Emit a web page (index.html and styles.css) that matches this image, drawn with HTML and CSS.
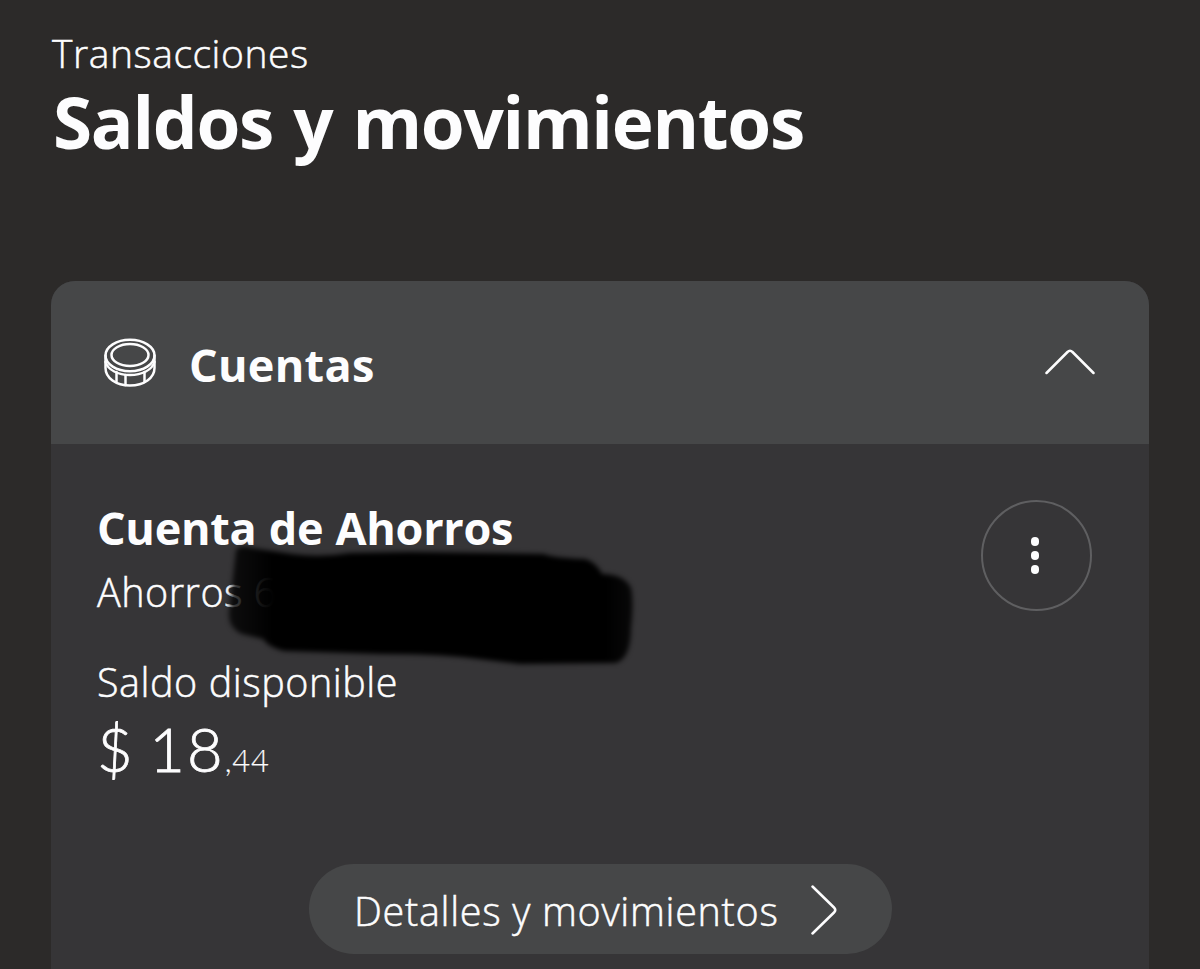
FILE: index.html
```html
<!DOCTYPE html>
<html lang="es">
<head>
    <meta charset="UTF-8">
    <meta name="viewport" content="width=device-width, initial-scale=1.0">
    <title>Saldos y movimientos</title>
    <link rel="stylesheet" href="styles.css">
</head>
<body>

    <header class="page-header">
        <p class="section-name">Transacciones</p>
        <h1>Saldos y movimientos</h1>
    </header>

    <section class="card">
        <div class="card-header">
            <svg class="coin-icon" width="54" height="50" viewBox="0 0 54 50">
                <ellipse cx="27" cy="17.5" rx="24.5" ry="15.7"/>
                <ellipse cx="27" cy="17" rx="18.5" ry="11"/>
                <path d="M2.5 17.5V30C2.5 40 13 47.5 27 47.5S51.5 40 51.5 30V17.5"/>
                <path d="M2.5 24C5 32 15 37 27 37S49 32 51.5 24"/>
                <path d="M13.5 34V44M22.5 37V47M41.5 34V44"/>
            </svg>
            <h2>Cuentas</h2>
            <svg class="arrow-up" width="52" height="28" viewBox="0 0 52 28">
                <path d="M2.5 25L23.5 4Q26 1.5 28.5 4L49.5 25"/>
            </svg>
        </div>

        <div class="card-body">
            <div class="account">
                <div class="account-info">
                    <h3>Cuenta de Ahorros</h3>
                    <div class="account-number">
                        <span>Ahorros</span> <span>6</span>
                        <svg class="scribble" width="420" height="134" viewBox="0 0 420 134">
                            <defs>
                                <linearGradient id="ink" x1="0" x2="1" y1="0" y2="0">
                                    <stop offset="0" stop-color="#000" stop-opacity="0.75"/>
                                    <stop offset="0.06" stop-color="#000" stop-opacity="0.88"/>
                                    <stop offset="0.11" stop-color="#000" stop-opacity="1"/>
                                    <stop offset="0.93" stop-color="#000"/>
                                    <stop offset="1" stop-color="#000" stop-opacity="0.85"/>
                                </linearGradient>
                                <filter id="soft" color-interpolation-filters="sRGB"><feGaussianBlur stdDeviation="2.5"/></filter>
                            </defs>
                            <path filter="url(#soft)" fill="url(#ink)" d="M16 10Q20 4 32 8L72 14Q100 18 130 13L190 12L324 14Q332 18 365 19Q376 22 382 34Q404 34 411 48Q414 62 411 88Q411 118 396 123L300 124L250 118Q215 114 160 114L64 111Q48 107 43 99L22 94Q8 88 9 72Z"/>
                        </svg>
                    </div>
                </div>
                <button class="menu-button" aria-label="Opciones">
                    <span class="dot"></span>
                    <span class="dot"></span>
                    <span class="dot"></span>
                </button>
            </div>

            <p class="balance-label">Saldo disponible</p>
            <p class="balance">$ 18<span class="cents">,44</span></p>

            <button class="details-button">
                <span>Detalles y movimientos</span>
                <svg class="arrow-right" width="28" height="52" viewBox="0 0 28 52">
                    <path d="M2.5 2.5L24 23.5Q26.5 26 24 28.5L2.5 49.5"/>
                </svg>
            </button>
        </div>
    </section>

</body>
</html>
```
FILE: styles.css
```css
* {
    box-sizing: border-box;
}
body {
    margin: 0;
    height: 969px;
    overflow: hidden;
    background-color: #2c2a29;
    color: #fdfdfe;
    font-family: "Open Sans", "Noto Sans", sans-serif;
    font-weight: 300;
    font-size: 39.5px;
    -webkit-text-stroke: 0.5px #fdfdfe;
}
h1, h2, h3, p {
    margin: 0;
}
h1, h2, h3 {
    font-weight: 700;
    -webkit-text-stroke: 0;
}
button {
    font: inherit;
    color: inherit;
    cursor: pointer;
}
svg {
    fill: none;
    stroke: #fdfdfe;
    stroke-width: 2.5;
    stroke-linecap: round;
    stroke-linejoin: round;
}
.page-header {
    height: 281px;
    padding: 33px 52px 0;
}
.section-name {
    font-size: 39px;
    line-height: 40px;
    letter-spacing: 0.55px;
}
h1 {
    margin: 9px 0 0 1px;
    font-size: 71px;
    line-height: 80px;
    letter-spacing: -1.3px;
    word-spacing: 3px;
    white-space: nowrap;
}
.card {
    margin: 0 51px;
    height: 720px;
    border-radius: 24px 24px 0 0;
    background-color: #363537;
    overflow: hidden;
}
.card-header {
    display: flex;
    align-items: center;
    height: 163px;
    padding: 0 53px 0 52px;
    background-color: #464748;
}
h2 {
    margin-left: 32px;
    padding-top: 5px;
    font-size: 45px;
    line-height: 60px;
    letter-spacing: 0.3px;
}
.arrow-up {
    margin: 0 0 2px auto;
}
.card-body {
    display: flex;
    flex-direction: column;
    padding: 56px 57px 0 46px;
}
.account {
    display: flex;
    justify-content: space-between;
    height: 157px;
}
h3 {
    font-size: 45px;
    line-height: 55px;
    letter-spacing: -0.3px;
    word-spacing: 1px;
}
.account-number {
    position: relative;
    margin-top: 12px;
    line-height: 50px;
    letter-spacing: 0.5px;
}
.scribble {
    position: absolute;
    left: 123px;
    top: -27px;
    stroke: none;
}
.menu-button {
    display: flex;
    flex-direction: column;
    align-items: center;
    justify-content: center;
    gap: 5.5px;
    width: 111px;
    height: 111px;
    padding: 0 3px 0 0;
    border: 2.5px solid #5f5f61;
    border-radius: 50%;
    background: none;
}
.dot {
    width: 8.5px;
    height: 8.5px;
    border-radius: 50%;
    background-color: #fdfdfe;
}
.balance-label {
    line-height: 50px;
    letter-spacing: 0.55px;
}
.balance {
    margin-top: 1px;
    font-family: Lato, "Open Sans", sans-serif;
    font-size: 61.5px;
    line-height: 80px;
    letter-spacing: 2px;
    word-spacing: -4px;
    -webkit-text-stroke: 0.8px #fdfdfe;
}
.cents {
    font-size: 31px;
    letter-spacing: 0.8px;
    -webkit-text-stroke: 0.2px #fdfdfe;
}
.details-button {
    display: flex;
    align-items: center;
    align-self: center;
    justify-content: space-between;
    width: 583px;
    height: 90px;
    margin: 64px 0 0 12px;
    padding: 4px 54px 0 45px;
    border: none;
    border-radius: 45px;
    background-color: #464748;
    letter-spacing: 0.7px;
    white-space: nowrap;
}
.arrow-right {
    margin-top: -2px;
}
```
